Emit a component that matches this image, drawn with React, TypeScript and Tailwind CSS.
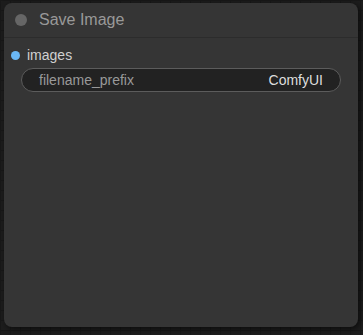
import React from "react";

const App: React.FC = () => {
  return (
    <div className="w-[363px] h-[335px] overflow-hidden bg-[#1d1d1d] bg-[linear-gradient(#181818_1px,transparent_1px),linear-gradient(90deg,#181818_1px,transparent_1px)] bg-[size:10px_10px] pt-[3px] pl-[4px] font-['Liberation_Sans',Arial,sans-serif]">
      {/* Node */}
      <div className="w-[354px] h-[324px] rounded-[8px] bg-[#353535] shadow-[2px_2px_6px_rgba(0,0,0,0.6)] flex flex-col">
        {/* Title bar */}
        <div className="h-[35px] flex items-center pl-[11px] gap-[12px] border-b border-[#2c2c2c]">
          <div className="w-[12px] h-[12px] rounded-full bg-[#666]" />
          <span className="text-[16px] text-[#999] leading-none">Save Image</span>
        </div>

        {/* Input slot */}
        <div className="flex items-center h-[20px] mt-[7px] pl-[7px] gap-[7px]">
          <div className="w-[9px] h-[9px] rounded-full bg-[#6ab7f5]" />
          <span className="text-[14px] text-[#d0d0d0] leading-none">images</span>
        </div>

        {/* Widget */}
        <div className="mx-[17px] mt-[3px] h-[24px] rounded-full bg-[#222] border border-[#5c5c5c] flex items-center justify-between px-[17px]">
          <span className="text-[14px] text-[#999] leading-none">filename_prefix</span>
          <span className="text-[14px] text-[#ddd] leading-none">ComfyUI</span>
        </div>
      </div>
    </div>
  );
};

export default App;
